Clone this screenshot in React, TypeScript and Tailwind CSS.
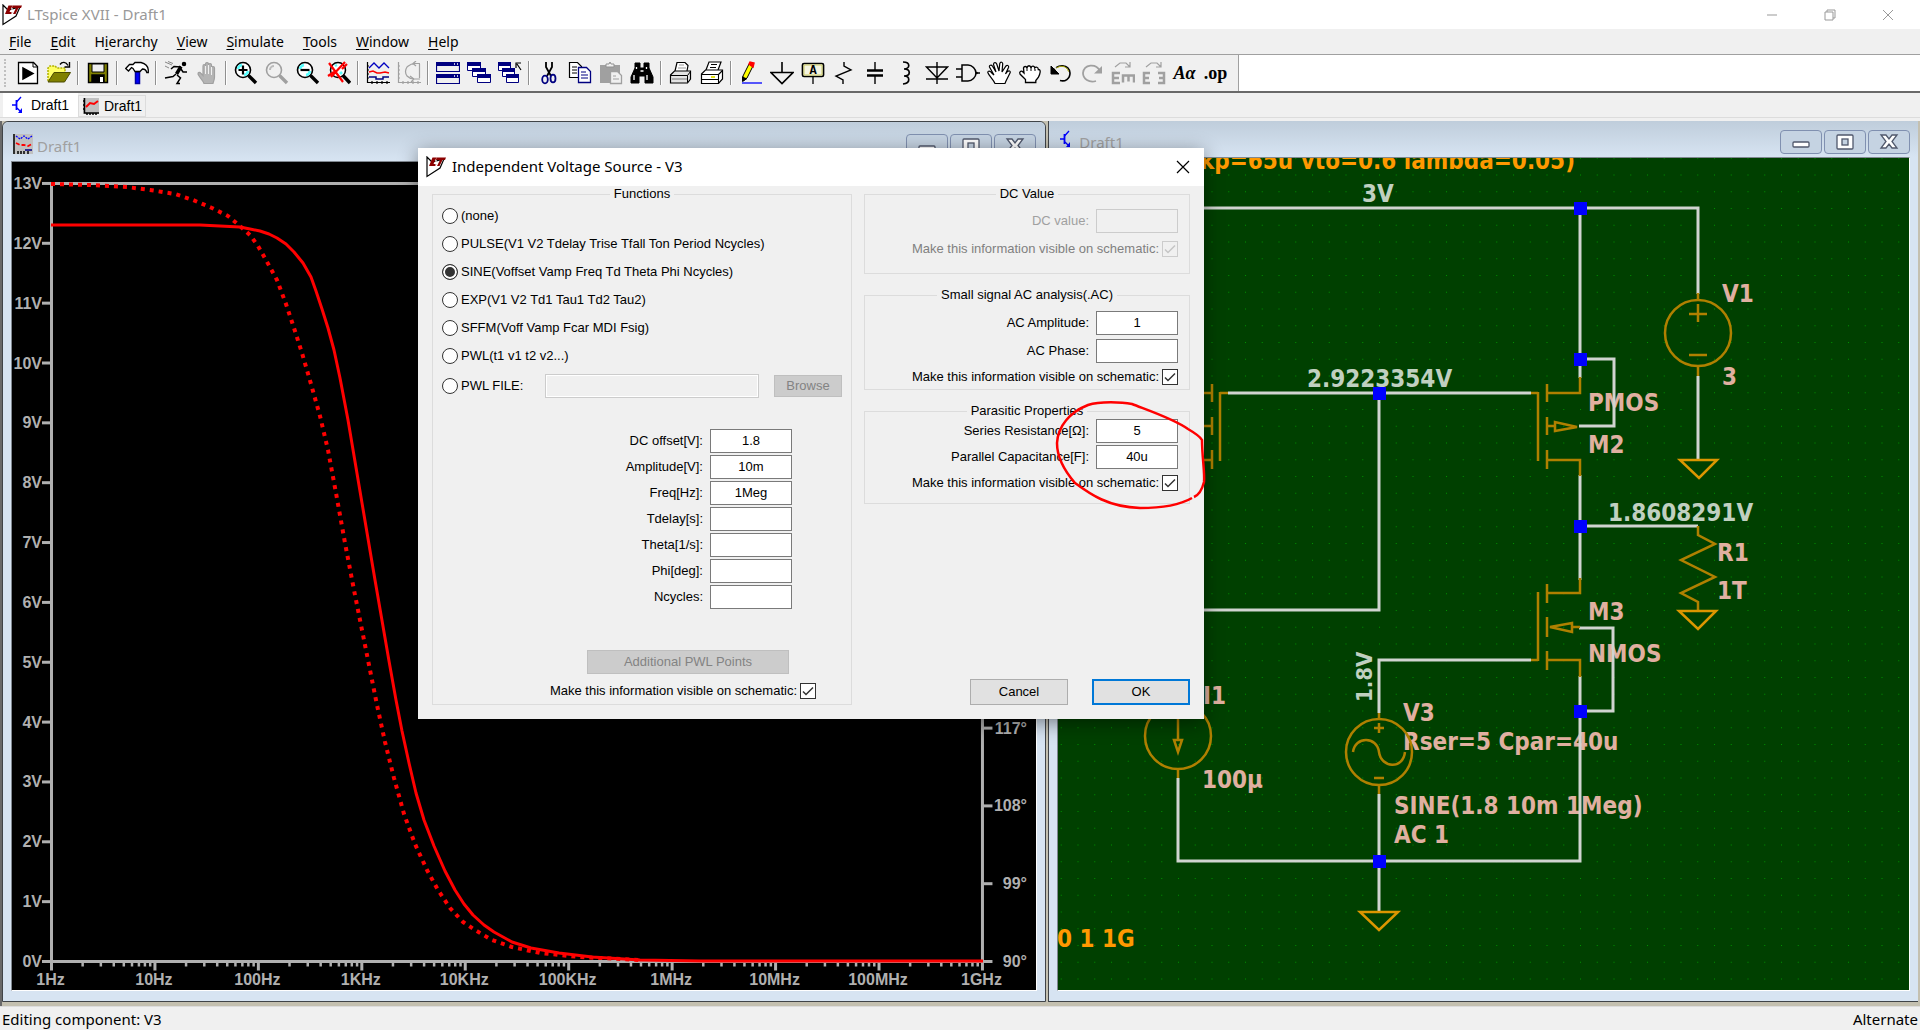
import { useState } from "react";
import type { ReactNode } from "react";

type Point = [number, number];

type ToolItem = {
  label: string;
  icon: ReactNode;
};

const menus = [
  ["", "F", "ile"],
  ["", "E", "dit"],
  ["H", "i", "erarchy"],
  ["", "V", "iew"],
  ["", "S", "imulate"],
  ["", "T", "ools"],
  ["", "W", "indow"],
  ["", "H", "elp"],
];

/* ---------- icons ---------- */

function Icon({ children }: { children: ReactNode }) {
  return (
    <svg width="24" height="24" viewBox="0 0 24 24" fill="none" stroke="#000" strokeWidth="1.5">
      {children}
    </svg>
  );
}

function LogoIcon() {
  return (
    <svg width="20" height="22" viewBox="0 0 20 22" fill="none">
      <path d="M1 1V20.500L14 12L18 3L6 6z" stroke="#000" strokeWidth="1.200" fill="#fff" />
      <path d="M6.500 1.500h4L7.500 8h3l-.8 2H3z" fill="#8b0000" />
      <path d="M10.500 1.500H20L19 4h-2.500L13.500 10h-2.500l3-6h-4z" fill="#8b0000" />
      <path d="M10 4v6" stroke="#fff" strokeWidth="1" />
    </svg>
  );
}

function MagnifierIcon({ mark, muted }: { mark: string; muted?: boolean }) {
  const color = muted ? "#a0a0a0" : "#000";
  return (
    <Icon>
      <circle cx="9" cy="9" r="7.5" fill={muted ? "none" : "#fff"} stroke={color} strokeWidth="1.6" />
      {!muted && <path d="M4 8a5 5 0 0 1 4-4M14 10a5 5 0 0 1-4 4" stroke="#5ff" strokeWidth="2.5" />}
      {muted && <path d="M5 9a4 4 0 0 1 4-4" stroke="#bbb" strokeWidth="2" />}
      <path d="M14.5 14.5L22 22" stroke={color} strokeWidth="3.4" />
      <path d={mark} stroke={color} strokeWidth="2.2" />
    </Icon>
  );
}

const toolGroups: ToolItem[][] = [
  [
    {
      label: "New schematic",
      icon: (
        <Icon>
          <path d="M2.500 1.500h15l4 4v17h-19z" fill="#fff" strokeWidth="1.300" />
          <path d="M17 1.500V6h4.500" strokeWidth="1" />
          <path d="M7 7v11l10-5.500z" fill="#000" />
        </Icon>
      ),
    },
    {
      label: "Open",
      icon: (
        <Icon>
          <path d="M1 20V7l2-2h5l2 2h8v4" fill="#ff6" stroke="#b0b000" strokeDasharray="2 1" />
          <path d="M1 21L7 11.500h16.500L17.500 21z" fill="#808000" stroke="#4a4a00" strokeWidth="1" />
          <path d="M13 3.500c2-3 6-3 8 1M22.500 1v5h-5" strokeWidth="1.400" />
        </Icon>
      ),
    },
  ],
  [
    {
      label: "Save",
      icon: (
        <Icon>
          <path d="M2.500 2.500h19v19h-19z" fill="#808000" strokeWidth="1.400" />
          <path d="M6 3h12v8H6z" fill="#f0f0f0" strokeWidth="1" />
          <path d="M6 14h12v7H6z" fill="#000" />
          <path d="M14 16h3v5h-3z" fill="#fff" stroke="none" />
        </Icon>
      ),
    },
  ],
  [
    {
      label: "Control panel",
      icon: (
        <Icon>
          <path d="M10.500 11h4v11.500h-4z" fill="#00f" stroke="#0000a0" />
          <path
            d="M.7 7.500L4.500 3.500H8L10 1.500h6c4 1 7 3.500 7.300 7.500v2.500h-1.500c-.5-2-1.500-3.500-4.300-3.500L15 10.500h-5L8 7.500 6.500 6.500 3.500 10z"
            fill="#fff"
            strokeWidth="1.300"
          />
        </Icon>
      ),
    },
  ],
  [
    {
      label: "Run",
      icon: (
        <Icon>
          <circle cx="20" cy="3" r="1.500" fill="#000" />
          <path d="M17 5.500L12.500 13" strokeWidth="3.500" />
          <path d="M17 6L10 5.500L7 8M17 8l2 3h4M12 13L9 15.500L1 17M13 14l3.500 3L13 22.500h3" strokeWidth="1.500" />
          <path d="M1 1l7 3M4 .5l5 2M1 5l4 2" stroke="#888" strokeWidth="1" />
        </Icon>
      ),
    },
    {
      label: "Halt",
      icon: (
        <Icon>
          <path
            d="M9 22.500C8 19 4 16 3 13c0-2 2-2 3-.5L8 14.500V5c0-2 2.500-2 2.500 0V3c0-2 3-2 3 0V4c0-2 3-2 3 0v3c0-2 3-2 3 0v9c0 3-1 4-1.500 6.500z"
            fill="#b4b4b4"
            stroke="#a0a0a0"
            strokeWidth="1.200"
          />
          <path d="M10.500 5v8M13.500 4v9M16.500 6v8" stroke="#f0f0f0" strokeWidth="1" />
        </Icon>
      ),
    },
  ],
  [
    { label: "Zoom in", icon: <MagnifierIcon mark="M9 4.500v9M4.500 9h9" /> },
    { label: "Pan", icon: <MagnifierIcon mark="" muted /> },
    { label: "Zoom out", icon: <MagnifierIcon mark="M4.500 9h9" /> },
    {
      label: "Zoom to fit",
      icon: (
        <Icon>
          <circle cx="11" cy="9" r="7.500" fill="#fff" />
          <path d="M8 5l2-1M13 13l2-2" stroke="#5ff" strokeWidth="2.500" />
          <path d="M16 14.500L23 22" strokeWidth="3.400" />
          <path d="M2 2l14 19M18 1L4 16M1 15l6-4M15 8l5-5" stroke="#f00" strokeWidth="2.200" />
        </Icon>
      ),
    },
  ],
  [
    {
      label: "Autorange",
      icon: (
        <Icon>
          <path d="M1.500 1v20.500H24M1 5h2M1 9h2M1 13h2M1 17h2M6 20v3M11 20v3M16 20v3M21 20v3" strokeWidth="1.200" />
          <path d="M3 7l5-5 5 5 5-5 5 5" stroke="#0000c0" strokeWidth="1.300" />
          <path d="M3 11l4-1 4 2h3l5-1 4 1" stroke="#f00" />
          <path d="M3 16h7v2h7v-2h6" stroke="#000080" />
        </Icon>
      ),
    },
    {
      label: "Plot settings",
      icon: (
        <Icon>
          <path d="M1.500 1v20.500H24M1 5h2M1 9h2M1 13h2M1 17h2M6 20v3M11 20v3M16 20v3M21 20v3" stroke="#a0a0a0" strokeWidth="1.200" />
          <path d="M23 2.500h-6c-3 0-5 2-7 3.500-2 3-2 6 0 9 2 2 4 3 7 3h6M19 0l-3 2.500L19 5M22.500 3v14M13 15l4 3-3 3" stroke="#a0a0a0" strokeWidth="1.200" />
        </Icon>
      ),
    },
  ],
  [
    {
      label: "Tile windows",
      icon: (
        <Icon>
          <path d="M.5 1.500h23v9H.5zM.5 13.500h23v9H.5z" fill="#f0f0f0" stroke="#000080" strokeWidth="1.200" />
          <path d="M0 1h24v4H0zM0 13h24v4H0z" fill="#000080" stroke="none" />
          <path d="M18 3h1M21 3h1M18 15h1M21 15h1" stroke="#fff" />
        </Icon>
      ),
    },
    {
      label: "Cascade windows",
      icon: (
        <Icon>
          {[0, 5, 10].map((o) => (
            <g key={o}>
              <path d={`M${o + 0.5} ${o * 1.2 + 1.5}h13v8h-13z`} fill="#fff" stroke="#000080" strokeWidth="1" />
              <path d={`M${o} ${o * 1.2 + 1}h14v4h-14z`} fill="#000080" stroke="none" />
            </g>
          ))}
        </Icon>
      ),
    },
    {
      label: "Close all windows",
      icon: (
        <Icon>
          {[0, 4, 8].map((o) => (
            <g key={o}>
              <path d={`M${o + 0.5} ${o * 1.5 + 1.5}h12v8h-12z`} fill="#fff" stroke="#000080" strokeWidth="1" />
              <path d={`M${o} ${o * 1.5 + 1}h13v4h-13z`} fill="#000080" stroke="none" />
            </g>
          ))}
          <path d="M23 9l-4-6M18 7V2h5" strokeWidth="1.200" />
        </Icon>
      ),
    },
  ],
  [
    {
      label: "Cut",
      icon: (
        <Icon>
          <path d="M9 1v5l5 9M15 1v5l-5 9" strokeWidth="1.800" />
          <ellipse cx="8" cy="18.500" rx="2.800" ry="3.800" stroke="#000080" strokeWidth="1.800" />
          <ellipse cx="16" cy="17.500" rx="2.500" ry="3.800" stroke="#000080" strokeWidth="1.800" />
        </Icon>
      ),
    },
    {
      label: "Copy",
      icon: (
        <Icon>
          <path d="M1.500 1.500h8l4 4v11h-12z" fill="#fff" strokeWidth="1.200" />
          <path d="M4 6h5M4 9h5M4 12h5" strokeWidth="1" />
          <path d="M10.500 6.500h8l4 4v11h-12z" fill="#fff" stroke="#000080" strokeWidth="1.300" />
          <path d="M13 11h5M13 14h7M13 17h7" stroke="#000080" strokeWidth="1" />
        </Icon>
      ),
    },
    {
      label: "Paste",
      icon: (
        <Icon>
          <path d="M1 4h20v18H1z" fill="#a0a0a0" stroke="none" />
          <path d="M7 6V3h3l1-2 1 2h3v3z" fill="#f0f0f0" stroke="#909090" strokeWidth="1" />
          <path d="M11.500 10.500h7l4 4v8h-11z" fill="#f0f0f0" stroke="#a0a0a0" strokeWidth="1.300" />
          <path d="M14 15h3M14 18h6" stroke="#a0a0a0" strokeWidth="1" />
        </Icon>
      ),
    },
    {
      label: "Find",
      icon: (
        <Icon>
          <path d="M5 2h5v5h4V2h5v5l4 9v6h-8v-7h-6v7H1v-6l4-9z" fill="#000" strokeWidth="1" />
          <path d="M6.500 6v2M16.500 6v2M4 14v5M17 14v5M10.500 10h3" stroke="#fff" strokeWidth="1.300" />
        </Icon>
      ),
    },
  ],
  [
    {
      label: "Print preview",
      icon: (
        <Icon>
          <path d="M6 10L8 1.500h8l3 3L18 10" fill="#fff" strokeWidth="1.200" />
          <path d="M10 4h5M9 7h8" stroke="#999" strokeWidth="1" />
          <path d="M1.500 14l4-4h16v8l-3 4h-17z" fill="#e4e4e4" strokeWidth="1.200" />
          <path d="M1.500 14.500h17v7M18.500 14.500l3-4" strokeWidth="1" />
          <path d="M3 18h15" stroke="#777" strokeWidth="1" />
        </Icon>
      ),
    },
    {
      label: "Print",
      icon: (
        <Icon>
          <path d="M6 9L9 1h12L18 9" fill="#fff" strokeWidth="1.200" />
          <path d="M11 3.500h6M10 6.500h6" strokeWidth="1" />
          <path d="M1.500 13l4-4h17v9l-4 4.500h-17z" fill="#fff" strokeWidth="1.200" />
          <path d="M1.500 13.500h17v9M18.500 13.500l4-4M2 18.500h16" strokeWidth="1.100" />
          <path d="M11 16h4" stroke="#dd0" strokeWidth="1.800" />
        </Icon>
      ),
    },
  ],
  [
    {
      label: "Wire",
      icon: (
        <Icon>
          <path d="M4 15L10 3l4 2L8 17l-4 3z" fill="#ff0" strokeWidth="1" />
          <path d="M10 3l1-2 4 1-1 4z" fill="#f00" stroke="#f00" />
          <path d="M3.500 15.500v5l4.500-3" fill="#000" strokeWidth="1" />
          <path d="M3 22h20" stroke="#00f" strokeWidth="1.300" />
        </Icon>
      ),
    },
    { label: "Ground", icon: <Icon><path d="M12 1v10M1 11.500h22L12 22.500z" strokeWidth="1.600" /></Icon> },
    {
      label: "Label net",
      icon: (
        <Icon>
          <rect x="1.500" y="2.500" width="21" height="13" rx="1.500" fill="#f4f4e0" strokeWidth="1.700" />
          <path d="M3 4h18v10H3z" stroke="#cc6" strokeWidth="1" />
          <path d="M12 16v7" strokeWidth="1.300" />
          <text x="12" y="13" textAnchor="middle" fontSize="12" fontWeight="bold" stroke="none" fill="#000" className="font-['Liberation_Mono',monospace]">A</text>
        </Icon>
      ),
    },
    { label: "Resistor", icon: <Icon><path d="M12 1v4l7 4L4 15l7 4v4" strokeWidth="1.400" /></Icon> },
    { label: "Capacitor", icon: <Icon><path d="M12 1v9M12 14v9" strokeWidth="1.400" /><path d="M4 9.500h16M4 14.500h16" strokeWidth="2.500" /></Icon> },
    { label: "Inductor", icon: <Icon><path d="M9 1c8 0 7 7 1 7 7 0 7 7 0 7 6 0 7 7-1 8" strokeWidth="1.700" /></Icon> },
    { label: "Diode", icon: <Icon><path d="M12 1v22M1.500 6h21L12 17zM1 18h22" strokeWidth="1.400" /></Icon> },
    {
      label: "Component",
      icon: (
        <Icon>
          <path d="M6 4h6c4 0 8 4 8 8s-4 8-8 8H6zM0 8h6M0 16h6M20 12h4" strokeWidth="1.500" />
          <circle cx="20.500" cy="12" r="1.300" fill="#000" stroke="none" />
        </Icon>
      ),
    },
    {
      label: "Move",
      icon: (
        <Icon>
          <path
            d="M8 22.500C6 18 2 15 .8 11.500c0-2 2.500-2 4 .5L7 14 2.500 6c-.5-2 2-2.500 3-.7L9 11 6.500 3.500C6.500 1 9 1 9.700 3L12 10l.8-7.500c.7-2 3-1.500 2.900.5L15 11l4-6c1.500-1.500 3 0 2.500 1.500L18.500 13l2-2.500c2-1.500 3.300 0 2.500 1.500L19 20l-1 2.500z"
            fill="#fff"
            strokeWidth="1.200"
          />
        </Icon>
      ),
    },
    {
      label: "Drag",
      icon: (
        <Icon>
          <path
            d="M7.500 21.500v-3L2 13c-1-2 1-4 3-2l1 1-.5-5c.5-2 3-2 3.500 0 .5-3 3.500-3 4 0 1-3 3.500-2 3.800 0 1-1.500 3.500-1 3.500 1.500 3 0 2 4 0 8l-2.500 3v2z"
            fill="#fff"
            strokeWidth="1.300"
          />
          <path d="M9 7v3M13 7v3M17 8v2" strokeWidth="1" />
        </Icon>
      ),
    },
    {
      label: "Undo",
      icon: (
        <Icon>
          <path d="M4 11C8 2 20 3 21 12c0 6-5 9-10 7.500" strokeWidth="1.600" />
          <path d="M6 8.500c4-5 12-4 13.500 2" stroke="#aa0" strokeWidth="1" />
          <path d="M2 5v8h8z" strokeWidth="1" fill="#000" />
          <path d="M5 7l4 4-2-5z" fill="#f0f0f0" stroke="none" />
        </Icon>
      ),
    },
    {
      label: "Redo",
      icon: (
        <Icon>
          <path d="M20 10C16 2 4 3 3 12c0 6 6 10 13 8" stroke="#a0a0a0" strokeWidth="1.800" />
          <path d="M22 5v7.500h-8z" fill="#a0a0a0" stroke="none" />
        </Icon>
      ),
    },
    {
      label: "Rotate",
      icon: (
        <Icon>
          <path d="M9 12H2v10h7M2 17h6M12 21.500v-7h11v7M17.500 14.500v6" stroke="#a0a0a0" strokeWidth="2.500" />
          <path d="M4 6l5-4h6l4 4M19 1v5h-5" stroke="#a0a0a0" strokeWidth="1.200" />
        </Icon>
      ),
    },
    {
      label: "Mirror",
      icon: (
        <Icon>
          <path d="M8 12H2v10h6M2 17h5M16 12h6v10h-6M22 17h-5" stroke="#a0a0a0" strokeWidth="2.500" />
          <path d="M4 6l5-4h6l4 4M19 1v5h-5" stroke="#a0a0a0" strokeWidth="1.200" />
        </Icon>
      ),
    },
    { label: "Text", icon: <span className="font-['Liberation_Serif',serif] text-lg font-bold italic">Aα</span> },
    { label: "SPICE directive", icon: <span className="font-['Liberation_Serif',serif] text-lg font-semibold">.op</span> },
  ],
];

function TransistorIcon() {
  return (
    <svg width="16" height="18" viewBox="0 0 16 18" fill="none" stroke="#00f" strokeWidth="1.300">
      <path d="M1 9h4M10 1L5.500 6M6 12l4 4" />
      <path d="M5.500 4v10" strokeWidth="1.800" />
      <path d="M11 12v5H7z" fill="#00f" stroke="none" />
    </svg>
  );
}

function WaveIcon() {
  return (
    <svg width="16" height="18" viewBox="0 0 16 18" fill="none">
      <path d="M0 1h16v16H0z" fill="#c0c0c0" />
      <path d="M1.500 1v15H16M0 4h1M0 8h1M0 12h1M4 16v2M7 16v2M10 16v2M13 16v2" stroke="#000" strokeWidth="1.500" />
      <path d="M3 10l4-4 4 1 4-3" stroke="#f00" strokeWidth="2" />
    </svg>
  );
}

function PlotIcon() {
  return (
    <svg width="20" height="20" viewBox="0 0 20 20" fill="none">
      <path d="M0 0h20v20H0z" fill="#c0c0c0" />
      <path d="M1 0v20M5 17v3M8 17v3M11 17v3M15 17v3" stroke="#000" strokeWidth="1.500" />
      <path d="M3 2l4 3 4-3 4 3 4-3" stroke="#00f" strokeWidth="1.300" strokeDasharray="2 1" />
      <path d="M3 9l4 2h4l4 1 4-2" stroke="#f00" strokeWidth="1.800" strokeDasharray="4 2" />
      <path d="M12 16h7" stroke="#000080" strokeWidth="1.500" />
    </svg>
  );
}

/* ---------- waveform ---------- */

const DECADE = 103.44;
const VOLT = 59.85;
const freqLabels = ["1Hz", "10Hz", "100Hz", "1KHz", "10KHz", "100KHz", "1MHz", "10MHz", "100MHz", "1GHz"];

const magnitude: Point[] = [
  [51, 225], [200, 225], [240, 227], [250, 229], [260, 231], [269, 234], [277, 238], [286, 244],
  [294, 252], [303, 263], [311, 277], [316, 291], [322, 309], [328, 328], [334, 350], [340, 378],
  [348, 420], [362, 503], [375, 580], [389, 661], [396, 700], [402, 731], [409, 763], [416, 793],
  [424, 820], [434, 846], [445, 871], [455, 890], [464, 904], [473, 915], [484, 925], [494, 932],
  [512, 942], [531, 948], [559, 953], [592, 957], [640, 960], [700, 961], [983, 961],
];

const phase: Point[] = [
  [51, 184], [90, 185], [127, 187], [150, 190], [175, 194], [193, 200], [212, 208], [228, 216],
  [240, 226], [250, 235], [258, 246], [266, 260], [277, 280], [286, 304], [294, 328], [302, 353],
  [311, 384], [320, 416], [328, 450], [336, 493], [345, 543], [354, 590], [365, 645], [377, 705],
  [385, 742], [394, 778], [404, 814], [415, 844], [427, 870], [438, 890], [450, 908], [463, 922],
  [475, 930], [492, 940], [512, 947], [540, 953], [580, 957], [640, 960],
];

function polyline(points: Point[]) {
  return points.map(([x, y]) => `${x},${y}`).join(" ");
}

function Waveform() {
  const left = 51.5;
  const bottom = 961.5;
  const top = 183.5;
  const right = left + DECADE * 9;

  return (
    <svg className="block size-full bg-black" role="img" aria-label="Frequency response">
      <g transform="translate(-12 -162)">
        <g stroke="#b0b0b0" strokeWidth="3" fill="none">
          <path d={`M${left} ${top}H${right}V${bottom}H${left}Z`} />
          {Array.from({ length: 14 }, (_, v) => (
            <path key={v} d={`M42 ${bottom - v * VOLT}H${left}`} />
          ))}
          {Array.from({ length: 11 }, (_, v) => (
            <path key={v} d={`M${right} ${bottom - v * 77.8}h10`} />
          ))}
          {freqLabels.map((label, i) => (
            <path key={label} d={`M${left + i * DECADE} ${bottom}v9`} />
          ))}
          {freqLabels.slice(1).map((label, i) =>
            [2, 3, 4, 5, 6, 7, 8, 9].map((n) => (
              <path key={label + n} strokeWidth="2.500" d={`M${left + (i + Math.log10(n)) * DECADE} ${bottom}v5`} />
            ))
          )}
        </g>
        <g fill="#b0b0b0" fontSize="16" fontWeight="bold" className="font-['Liberation_Sans',sans-serif]">
          {Array.from({ length: 14 }, (_, v) => (
            <text key={v} x="42" y={967 - v * VOLT} textAnchor="end">{v}V</text>
          ))}
          {Array.from({ length: 3 }, (_, i) => (
            <text key={i} x="1027" y={967 - i * 77.8} textAnchor="end">{90 + i * 9}°</text>
          ))}
          <text x="1027" y="734" textAnchor="end">117°</text>
          {freqLabels.map((label, i) => (
            <text key={label} x={left + i * DECADE - 1} y="985" textAnchor="middle">{label}</text>
          ))}
        </g>
        <g stroke="#f00" strokeWidth="3" fill="none" strokeLinejoin="round">
          <polyline points={polyline(magnitude)} />
          <polyline points={polyline(phase)} strokeDasharray="4 5" strokeWidth="4" />
        </g>
      </g>
    </svg>
  );
}

/* ---------- schematic ---------- */

const junctions: Point[] = [
  [1580, 208], [1580, 359], [1379, 393], [1580, 526], [1580, 711], [1379, 861],
];

const netLabels: [number, number, string][] = [
  [1362, 202, "3V"],
  [1307, 387, "2.9223354V"],
  [1608, 521, "1.8608291V"],
];

const partLabels: [number, number, string][] = [
  [1722, 302, "V1"],
  [1722, 385, "3"],
  [1588, 411, "PMOS"],
  [1588, 453, "M2"],
  [1717, 561, "R1"],
  [1717, 599, "1T"],
  [1588, 620, "M3"],
  [1588, 662, "NMOS"],
  [1203, 704, "I1"],
  [1202, 788, "100µ"],
  [1403, 721, "V3"],
  [1403, 750, "Rser=5 Cpar=40u"],
  [1394, 814, "SINE(1.8 10m 1Meg)"],
  [1394, 843, "AC 1"],
];

function Schematic() {
  return (
    <svg className="block size-full bg-[#004000]" role="img" aria-label="Schematic">
      <defs>
        <pattern id="grid" x="1211.500" y="208" width="16.750" height="16.750" patternUnits="userSpaceOnUse">
          <rect width="1" height="1" fill="#009000" />
        </pattern>
      </defs>
      <g transform="translate(-1058 -158)">
        <rect x="1058" y="158" width="3000" height="2000" fill="url(#grid)" />

        <g className="font-['DejaVu_Sans_Condensed','DejaVu_Sans',sans-serif]" fontSize="24" fontWeight="bold">
          <g fill="#c0d0c0">
            {netLabels.map(([x, y, text]) => (
              <text key={text} x={x} y={y}>{text}</text>
            ))}
            <text transform="translate(1372 702) rotate(-90)" fontSize="22">1.8V</text>
          </g>
          <g fill="#e0b0a0">
            {partLabels.map(([x, y, text]) => (
              <text key={text} x={x} y={y}>{text}</text>
            ))}
          </g>
          <g fill="#ff9900">
            <text x="1575" y="169" textAnchor="end">kp=65u vto=0.6 lambda=0.05)</text>
            <text x="1057" y="947">0 1 1G</text>
          </g>
        </g>

        <g stroke="#d0d4d0" strokeWidth="3" fill="none">
          <path d="M1180 208H1698V294M1580 208V378M1580 359H1614V426H1579" />
          <path d="M1228 393H1531M1379 393V610H1180M1698 376V459M1580 475V580M1580 526H1698" />
          <path d="M1579 628H1613V711H1580M1531 660H1379V713M1580 676V861H1178V778M1379 794V912" />
        </g>

        <g stroke="#b08000" strokeWidth="2.500" fill="none">
          <circle cx="1698" cy="333" r="33" />
          <path d="M1698 293v7M1698 366v10M1689 314h18M1698 304v18M1689 355h18" />
          <circle cx="1379" cy="752" r="33" />
          <path d="M1379 713v6M1379 785v9M1374 728h10M1379 723v10M1374 778h10" />
          <path d="M1353 752c2-16 24-16 26 0s24 18 26 0" />
          <circle cx="1178" cy="736" r="33" />
          <path d="M1178 710v30M1174 740h8l-4 12zM1178 769v9" />

          <path d="M1580 377V393H1547M1547 384v18M1547 417v18M1547 450v19M1538 392v69M1531 393h7M1547 460H1580V476M1547 426h8" />
          <path d="M1555 422v9l22-4z" />
          <path d="M1580 578V593H1547M1547 584v19M1547 617v20M1547 651v19M1538 592v69M1531 660h7M1547 660H1580V677M1572 627h8" />
          <path d="M1572 623v9l-22-5z" />
          <path d="M1220 392v69M1220 393h8M1212 384v18M1212 417v18M1212 450v19M1200 393h12M1200 426h12M1200 460h12" />
          <path d="M1698 526v9l17 9-34 16 34 17-34 16 17 9v9" />
        </g>

        <g stroke="#dc9600" strokeWidth="2.500" fill="none">
          <path d="M1680 460h37l-18 18z" />
          <path d="M1679 611h37l-18 18z" />
          <path d="M1360 912h38l-19 18z" />
        </g>

        {junctions.map(([x, y]) => (
          <rect key={`${x}-${y}`} x={x - 6} y={y - 6} width="13" height="13" fill="#00f" />
        ))}
      </g>
    </svg>
  );
}

/* ---------- child windows ---------- */

function CaptionButton({ label, children }: { label: string; children: ReactNode }) {
  return (
    <button
      type="button"
      aria-label={label}
      className="flex h-6 w-[42px] items-center justify-center rounded-sm border border-[#8090b0] bg-[#c5d3e2]"
    >
      <svg width="20" height="18" viewBox="0 0 20 18" fill="#fff" stroke="#50586c" strokeWidth="1.300">
        {children}
      </svg>
    </button>
  );
}

function ChildWindow({
  title,
  icon,
  children,
  className,
  barClassName,
}: {
  title: string;
  icon: ReactNode;
  children: ReactNode;
  className: string;
  barClassName: string;
}) {
  return (
    <section className={`flex min-w-0 flex-col bg-[#d7e4f2] ${className}`}>
      <header className={`flex shrink-0 items-start bg-linear-to-b from-[#bfcddb] to-[#d7e4f2] ${barClassName}`}>
        {icon}
        <span className="ml-1 grow text-[15px] leading-6 text-[#a0a0a0]">{title}</span>
        <div className="flex gap-0.5">
          <CaptionButton label="Minimize">
            <rect x="2" y="9" width="16" height="5" rx="1" />
          </CaptionButton>
          <CaptionButton label="Restore">
            <rect x="2" y="2" width="16" height="14" rx="1" />
            <rect x="7" y="6" width="6" height="6" fill="#c5d3e2" />
          </CaptionButton>
          <CaptionButton label="Close">
            <path d="M2 2h5l3 4 3-4h5l-5 6.500 5 6.500h-5l-3-4-3 4H2l5-6.500z" />
          </CaptionButton>
        </div>
      </header>
      <div className="mx-2 mb-2.5 min-h-0 grow border border-[#808890] border-r-white border-b-white">
        {children}
      </div>
    </section>
  );
}

/* ---------- dialog ---------- */

function Group({ title, className, children }: { title: string; className: string; children: ReactNode }) {
  return (
    <fieldset className={`min-w-0 border border-[#dcdcdc] ${className}`}>
      <legend className="mx-auto px-1 leading-4">{title}</legend>
      {children}
    </fieldset>
  );
}

function Field({ id, label, value = "", disabled }: { id: string; label: string; value?: string; disabled?: boolean }) {
  return (
    <div className="flex items-center justify-end gap-[7px]">
      <label htmlFor={id} className={disabled ? "text-[#a0a0a0]" : ""}>
        {label}
      </label>
      <input
        id={id}
        type="text"
        defaultValue={value}
        disabled={disabled}
        className="h-6 w-[82px] border border-[#7a7a7a] bg-white pb-0.5 text-center disabled:border-[#cccccc] disabled:bg-[#f0f0f0]"
      />
    </div>
  );
}

function VisibleCheck({ id, disabled, className }: { id: string; disabled?: boolean; className: string }) {
  return (
    <div className={`flex h-4 items-center justify-end gap-[3px] ${className}`}>
      <label htmlFor={id} className={disabled ? "text-[#808080]" : ""}>
        Make this information visible on schematic:
      </label>
      <span className="grid size-4 shrink-0">
        <input
          id={id}
          type="checkbox"
          defaultChecked
          disabled={disabled}
          className="peer col-start-1 row-start-1 size-4 appearance-none border border-[#333333] bg-white disabled:border-[#cccccc] disabled:bg-[#f0f0f0]"
        />
        <svg
          viewBox="0 0 16 16"
          fill="none"
          className="pointer-events-none invisible col-start-1 row-start-1 size-4 stroke-[#333333] peer-checked:visible peer-disabled:stroke-[#c4c4c4]"
          strokeWidth="1.500"
        >
          <path d="M3 8.500l3 3 7-7" />
        </svg>
      </span>
    </div>
  );
}

const sourceFunctions = [
  "(none)",
  "PULSE(V1 V2 Tdelay Trise Tfall Ton Period Ncycles)",
  "SINE(Voffset Vamp Freq Td Theta Phi Ncycles)",
  "EXP(V1 V2 Td1 Tau1 Td2 Tau2)",
  "SFFM(Voff Vamp Fcar MDI Fsig)",
  "PWL(t1 v1 t2 v2...)",
  "PWL FILE:",
];

const sineParams = [
  ["DC offset[V]:", "1.8"],
  ["Amplitude[V]:", "10m"],
  ["Freq[Hz]:", "1Meg"],
  ["Tdelay[s]:", ""],
  ["Theta[1/s]:", ""],
  ["Phi[deg]:", ""],
  ["Ncycles:", ""],
];

function SourceDialog() {
  const [selected, setSelected] = useState(2);

  return (
    <div
      role="dialog"
      aria-label="Independent Voltage Source - V3"
      className="absolute top-[148px] left-[418px] w-[786px] bg-[#f0f0f0] font-['Liberation_Sans',Arial,sans-serif] text-[13px] text-black shadow-[0_4px_18px_rgba(0,0,0,0.45)]"
    >
      <header className="flex h-[38px] items-center bg-white pr-3.5 pl-2">
        <LogoIcon />
        <h2 className="ml-1.5 grow font-['Noto_Sans',sans-serif] text-[15px]">Independent Voltage Source - V3</h2>
        <button type="button" aria-label="Close dialog">
          <svg width="14" height="14" viewBox="0 0 14 14" stroke="#000" strokeWidth="1.200">
            <path d="M1 1l12 12M13 1L1 13" />
          </svg>
        </button>
      </header>

      <div className="flex gap-3 px-3.5 pb-3.5">
        <Group title="Functions" className="w-[420px] px-[9px] pb-[5px]">
          {sourceFunctions.map((name, i) => (
            <div key={name} className={`flex items-center ${i === 6 ? "h-8" : "h-7"}`}>
              <input
                id={`fn-${i}`}
                type="radio"
                name="function"
                checked={selected === i}
                onChange={() => setSelected(i)}
                className="size-4 appearance-none rounded-full border border-[#333333] bg-white checked:bg-[#333333] checked:shadow-[inset_0_0_0_2px_white]"
              />
              <label htmlFor={`fn-${i}`} className="ml-[3px] grow">
                {name}
              </label>
              {i === 6 && (
                <>
                  <input
                    type="text"
                    aria-label="PWL file"
                    disabled
                    className="h-6 w-[214px] border border-[#cccccc] bg-[#f0f0f0] shadow-[inset_0_0_0_1px_white]"
                  />
                  <button
                    type="button"
                    disabled
                    className="ml-[15px] h-[22px] w-[68px] border border-[#bfbfbf] bg-[#cccccc] text-[#838383]"
                  >
                    Browse
                  </button>
                </>
              )}
            </div>
          ))}

          <div className="mt-[27px] mr-[50px] flex flex-col gap-0.5">
            {sineParams.map(([label, value], i) => (
              <Field key={label} id={`param-${i}`} label={label} value={value} />
            ))}
          </div>

          <div className="mt-[41px] mr-[53px] flex justify-end">
            <button type="button" disabled className="h-6 w-[202px] border border-[#bfbfbf] bg-[#cccccc] text-[#838383]">
              Additional PWL Points
            </button>
          </div>
          <VisibleCheck id="fn-visible" className="mt-[9px] mr-[26px]" />
        </Group>

        <div className="flex grow flex-col gap-[13px]">
          <Group title="DC Value" className="px-[11px] pb-4">
            <div className="mt-[7px]">
              <Field id="dc-value" label="DC value:" disabled />
            </div>
            <VisibleCheck id="dc-visible" className="mt-2" disabled />
          </Group>

          <Group title="Small signal AC analysis(.AC)" className="px-[11px] pb-1">
            <div className="mt-2 flex flex-col gap-1">
              <Field id="ac-amplitude" label="AC Amplitude:" value="1" />
              <Field id="ac-phase" label="AC Phase:" />
            </div>
            <VisibleCheck id="ac-visible" className="mt-1.5" />
          </Group>

          <Group title="Parasitic Properties" className="px-[11px] pb-3">
            <div className="flex flex-col gap-0.5">
              <Field id="series" label="Series Resistance[Ω]:" value="5" />
              <Field id="parallel" label="Parallel Capacitance[F]:" value="40u" />
            </div>
            <VisibleCheck id="par-visible" className="mt-1.5" />
          </Group>

          <div className="mt-auto flex justify-end gap-6">
            <button type="button" className="h-[26px] w-[98px] border border-[#adadad] bg-[#e1e1e1]">
              Cancel
            </button>
            <button type="button" className="h-[26px] w-[98px] border-2 border-[#0078d7] bg-[#e1e1e1]">
              OK
            </button>
          </div>
        </div>
      </div>

      <svg className="pointer-events-none absolute inset-0 size-full overflow-visible" fill="none">
        <path
          transform="translate(-418 -148)"
          d="M1192 498C1178 506 1156 508 1140 508C1108 507 1090 494 1075 483C1062 468 1057 456 1057 443C1058 426 1070 412 1088 405C1100 401 1122 402 1132 404C1150 411 1174 419 1188 429Q1200 436 1202 440C1202 456 1205 474 1204 482Q1201 494 1194 497"
          stroke="#f00"
          strokeWidth="2.500"
        />
      </svg>
    </div>
  );
}

/* ---------- page ---------- */

export default function App() {
  return (
    <div className="relative flex h-screen flex-col overflow-hidden bg-[#f0f0f0] font-['Noto_Sans',sans-serif] text-sm text-black">
      <header className="flex h-[29px] shrink-0 items-center bg-white pr-[3px] pl-0.5">
        <LogoIcon />
        <h1 className="ml-[5px] grow text-[15px] text-[#999999]">LTspice XVII - Draft1</h1>
        {["M1 6h10", "M1 3h8v8H1zM3 3V1h8v8H9", "M1 1l10 10M11 1L1 11"].map((d, i) => (
          <button key={d} type="button" aria-label={["Minimize", "Restore", "Close"][i]} className="flex h-full w-[58px] items-center justify-center">
            <svg width="12" height="12" viewBox="0 0 12 12" fill="none" stroke="#999999" strokeWidth="1">
              <path d={d} />
            </svg>
          </button>
        ))}
      </header>

      <nav className="flex h-[26px] shrink-0 items-center gap-[19px] border-b border-[#a0a0a0] pl-[9px]">
        {menus.map(([before, key, after]) => (
          <button key={key + after} type="button">
            {before}
            <u className="underline-offset-2">{key}</u>
            {after}
          </button>
        ))}
      </nav>

      <div className="flex h-9 shrink-0 bg-white">
        <div role="toolbar" className="flex items-center border-r border-[#a0a0a0] bg-[#f0f0f0] pr-[7px]">
          <div className="ml-1 h-7 w-2 border-l-2 border-dotted border-[#c0c0c0]" />
          {toolGroups.map((group, g) => (
            <div key={g} className="flex items-center">
              {g > 0 && <div className="mx-[3px] h-6 w-0.5 border-l border-[#909090] bg-white" />}
              {group.map((tool) => (
                <button key={tool.label} type="button" title={tool.label} aria-label={tool.label} className="flex h-8 w-[31px] items-center justify-center">
                  {tool.icon}
                </button>
              ))}
            </div>
          ))}
        </div>
      </div>

      <div role="tablist" className="flex h-[27px] shrink-0 items-start border-t-2 border-b border-t-[#696969] border-b-[#dcdcdc] pl-[3px] font-['Liberation_Sans',sans-serif]">
        <button type="button" role="tab" aria-selected="true" className="flex h-6 w-[75px] items-center gap-1 bg-white pl-2">
          <TransistorIcon />
          Draft1
        </button>
        <button type="button" role="tab" aria-selected="false" className="mt-0.5 flex h-[22px] w-[68px] items-center gap-[5px] border border-[#dcdcdc] pl-1">
          <WaveIcon />
          Draft1
        </button>
      </div>

      <main className="mt-[3px] flex min-h-0 grow gap-0.5 border-l-2 border-[#696969] bg-[#c4c0b0] pr-0.5 pb-1">
        <ChildWindow
          title="Draft1"
          icon={<PlotIcon />}
          className="flex-[1044] rounded-t-md border border-[#404448]"
          barClassName="h-[39px] rounded-t-md pt-3 pr-[9px] pl-2.5"
        >
          <Waveform />
        </ChildWindow>
        <ChildWindow
          title="Draft1"
          icon={<TransistorIcon />}
          className="flex-[870] border-b border-l border-[#404448]"
          barClassName="h-9 pt-[9px] pr-2 pl-2.5"
        >
          <Schematic />
        </ChildWindow>
      </main>

      <footer className="flex h-6 shrink-0 items-center justify-between border-t border-[#dcdcdc] px-0.5 pt-0.5 text-[15px]">
        <span>Editing component: V3</span>
        <span>Alternate</span>
      </footer>

      <SourceDialog />
    </div>
  );
}
